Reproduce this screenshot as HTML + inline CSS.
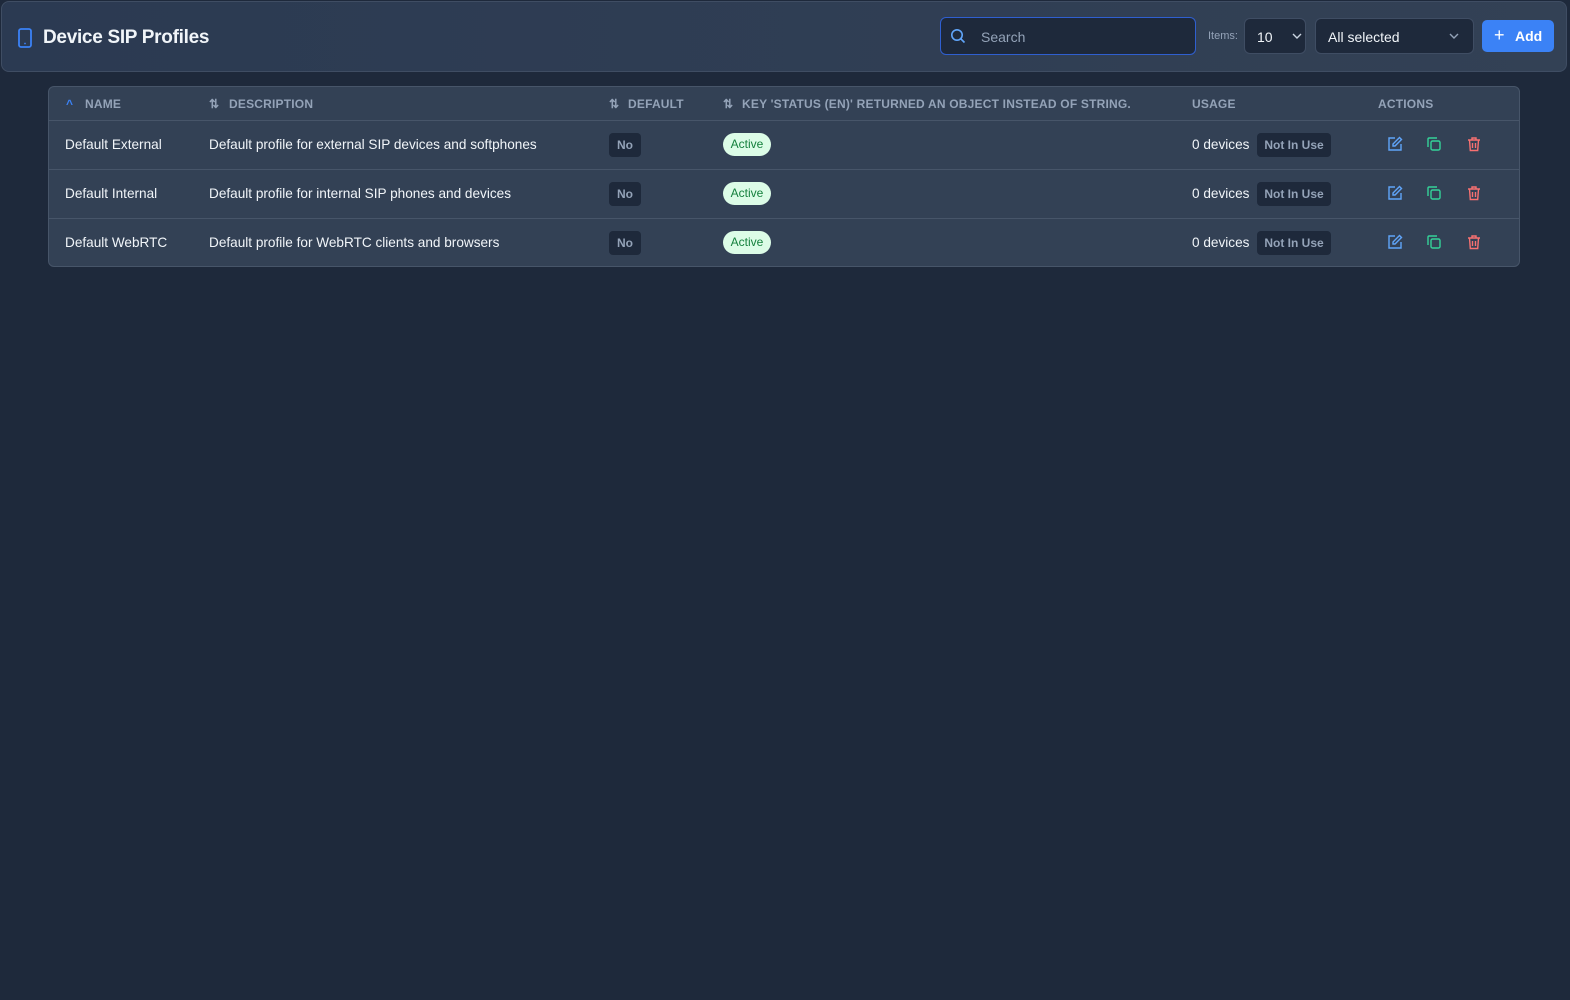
<!DOCTYPE html>
<html><head><style>
*{box-sizing:border-box;margin:0;padding:0}
body{width:1570px;height:1000px;background:#1e293b;font-family:"Liberation Sans",sans-serif;color:#f1f5f9;position:relative;overflow:hidden}
.hdr{position:absolute;left:1px;top:1px;width:1566px;height:71px;background:linear-gradient(90deg,#2b3a52,#334155);border:1px solid #3f4d63;border-radius:8px}
.title{position:absolute;left:41px;top:25px;font-size:19px;font-weight:bold;color:#f1f5f9;letter-spacing:-.3px}
.search{position:absolute;left:940px;top:17px;width:256px;height:38px;border:1px solid #2f5fd0;border-radius:6px;background:#1e293b}
.search span{position:absolute;left:40px;top:11px;font-size:14px;color:#94a3b8}
.lbl{position:absolute;left:1208px;top:30px;font-size:11px;color:#94a3b8}
.sel{position:absolute;top:18px;height:36px;border:1px solid #3f4d63;border-radius:6px;background:#1e293b;font-size:14px;color:#f1f5f9}
.add{position:absolute;left:1482px;top:20px;width:72px;height:32px;background:#3b82f6;border-radius:5px;color:#fff;font-size:14px;font-weight:bold}
.tbl{position:absolute;left:48px;top:86px;width:1472px;height:181px;background:#334155;border:1px solid #475569;border-radius:6px;overflow:hidden}
.th{position:absolute;top:10px;font-size:12px;font-weight:bold;color:#94a3b8;letter-spacing:.2px}
.row{position:absolute;left:0;width:1472px;height:49px;border-top:1px solid #475569}
.c{position:absolute;top:16px;font-size:13.6px;color:#f1f5f9}
.no{position:absolute;left:560px;top:12px;width:32px;height:24px;background:#1e293b;border-radius:4px;font-size:12px;font-weight:bold;color:#94a3b8;text-align:center;line-height:24px}
.act{position:absolute;left:674px;top:12px;width:48px;height:23px;background:#dcfce7;border-radius:12px;font-size:12px;color:#15803d;text-align:center;line-height:23px}
.niu{position:absolute;left:1208px;top:12px;width:74px;height:24px;background:#1e293b;border-radius:4px;font-size:12px;font-weight:bold;color:#94a3b8;text-align:center;line-height:24px}
svg.i{position:absolute;top:15px}
</style></head><body>
<div class="hdr">
<svg style="position:absolute;left:16px;top:26px" width="14" height="20" viewBox="0 0 14 20"><rect x="1" y="1" width="12" height="18" rx="2" fill="none" stroke="#3b82f6" stroke-width="1.8"/><circle cx="7" cy="15.5" r=".9" fill="#3b82f6"/></svg>
<div class="title">Device SIP Profiles</div>
</div>
<div class="search"><svg style="position:absolute;left:9px;top:10px" width="16" height="16" viewBox="0 0 16 16"><circle cx="7" cy="7" r="5.2" fill="none" stroke="#60a5fa" stroke-width="1.6"/><path d="M11 11l3.5 3.5" stroke="#60a5fa" stroke-width="1.6"/></svg><span>Search</span></div>
<div class="lbl">Items:</div>
<div class="sel" style="left:1244px;width:62px"><span style="position:absolute;left:12px;top:10px">10</span><svg style="position:absolute;left:47px;top:14px" width="10" height="7" viewBox="0 0 10 7"><path d="M1 1l4 4 4-4" fill="none" stroke="#cbd5e1" stroke-width="1.4"/></svg></div>
<div class="sel" style="left:1315px;width:159px"><span style="position:absolute;left:12px;top:10px">All selected</span><svg style="position:absolute;left:133px;top:14px" width="10" height="7" viewBox="0 0 10 7"><path d="M1 1l4 4 4-4" fill="none" stroke="#94a3b8" stroke-width="1.4"/></svg></div>
<div class="add"><span style="position:absolute;left:12px;top:5px;font-size:18px;font-weight:normal">+</span><span style="position:absolute;left:33px;top:8px">Add</span></div>
<div class="tbl">
<div class="th" style="left:17px;color:#3b82f6">^</div><div class="th" style="left:36px">NAME</div>
<div class="th" style="left:160px">⇅</div><div class="th" style="left:180px">DESCRIPTION</div>
<div class="th" style="left:560px">⇅</div><div class="th" style="left:579px">DEFAULT</div>
<div class="th" style="left:674px">⇅</div><div class="th" style="left:693px">KEY 'STATUS (EN)' RETURNED AN OBJECT INSTEAD OF STRING.</div>
<div class="th" style="left:1143px">USAGE</div>
<div class="th" style="left:1329px">ACTIONS</div>
<div class="row" style="top:33px"><div class="c" style="left:16px">Default External</div><div class="c" style="left:160px">Default profile for external SIP devices and softphones</div><div class="no">No</div><div class="act">Active</div><div class="c" style="left:1143px">0 devices</div><div class="niu">Not In Use</div>
<svg class="i" style="left:1338px" width="16" height="16" viewBox="0 0 16 16"><path d="M8 2H2v12h12V8M12.5 1.5l2 2L8 10H6V8z" fill="none" stroke="#60a5fa" stroke-width="1.4"/></svg>
<svg class="i" style="left:1377px" width="16" height="16" viewBox="0 0 16 16"><rect x="5" y="5" width="9" height="9" rx="1.5" fill="none" stroke="#34d399" stroke-width="1.4"/><path d="M2 11V3a1 1 0 011-1h8" fill="none" stroke="#34d399" stroke-width="1.4"/></svg>
<svg class="i" style="left:1417px" width="16" height="16" viewBox="0 0 16 16"><path d="M2 4h12M6 4V2h4v2M3.5 4l.8 10.5h7.4L12.5 4M6.5 7v5M9.5 7v5" fill="none" stroke="#f87171" stroke-width="1.4"/></svg></div>
<div class="row" style="top:82px"><div class="c" style="left:16px">Default Internal</div><div class="c" style="left:160px">Default profile for internal SIP phones and devices</div><div class="no">No</div><div class="act">Active</div><div class="c" style="left:1143px">0 devices</div><div class="niu">Not In Use</div>
<svg class="i" style="left:1338px" width="16" height="16" viewBox="0 0 16 16"><path d="M8 2H2v12h12V8M12.5 1.5l2 2L8 10H6V8z" fill="none" stroke="#60a5fa" stroke-width="1.4"/></svg>
<svg class="i" style="left:1377px" width="16" height="16" viewBox="0 0 16 16"><rect x="5" y="5" width="9" height="9" rx="1.5" fill="none" stroke="#34d399" stroke-width="1.4"/><path d="M2 11V3a1 1 0 011-1h8" fill="none" stroke="#34d399" stroke-width="1.4"/></svg>
<svg class="i" style="left:1417px" width="16" height="16" viewBox="0 0 16 16"><path d="M2 4h12M6 4V2h4v2M3.5 4l.8 10.5h7.4L12.5 4M6.5 7v5M9.5 7v5" fill="none" stroke="#f87171" stroke-width="1.4"/></svg></div>
<div class="row" style="top:131px"><div class="c" style="left:16px">Default WebRTC</div><div class="c" style="left:160px">Default profile for WebRTC clients and browsers</div><div class="no">No</div><div class="act">Active</div><div class="c" style="left:1143px">0 devices</div><div class="niu">Not In Use</div>
<svg class="i" style="left:1338px" width="16" height="16" viewBox="0 0 16 16"><path d="M8 2H2v12h12V8M12.5 1.5l2 2L8 10H6V8z" fill="none" stroke="#60a5fa" stroke-width="1.4"/></svg>
<svg class="i" style="left:1377px" width="16" height="16" viewBox="0 0 16 16"><rect x="5" y="5" width="9" height="9" rx="1.5" fill="none" stroke="#34d399" stroke-width="1.4"/><path d="M2 11V3a1 1 0 011-1h8" fill="none" stroke="#34d399" stroke-width="1.4"/></svg>
<svg class="i" style="left:1417px" width="16" height="16" viewBox="0 0 16 16"><path d="M2 4h12M6 4V2h4v2M3.5 4l.8 10.5h7.4L12.5 4M6.5 7v5M9.5 7v5" fill="none" stroke="#f87171" stroke-width="1.4"/></svg></div>
</div>
</body></html>
